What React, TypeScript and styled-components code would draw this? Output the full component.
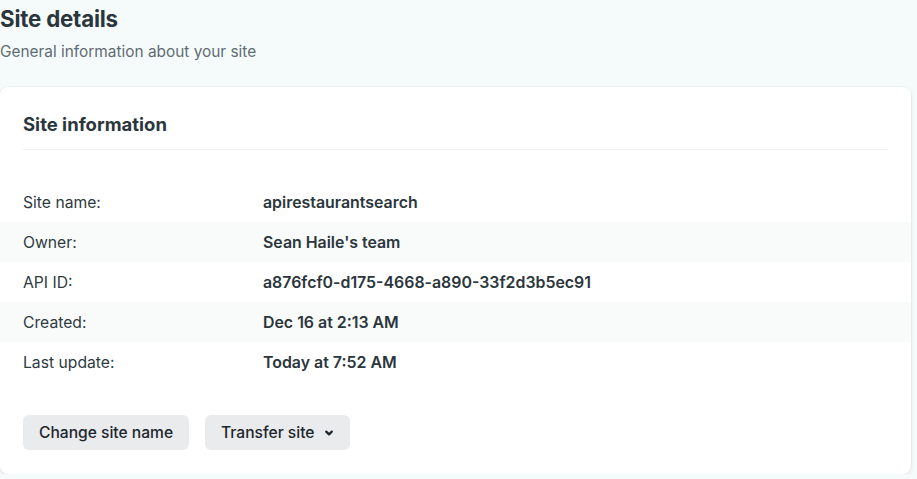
import React from 'react';
import styled, { createGlobalStyle } from 'styled-components';

const GlobalStyle = createGlobalStyle`
  html, body {
    margin: 0;
    padding: 0;
    background: #f5fbfb;
    font-family: Inter, "Noto Sans", "Liberation Sans", sans-serif;
    color: #2e3a41;
    -webkit-font-smoothing: antialiased;
  }
`;

const Page = styled.div`
  width: 911px;
  padding-top: 5px;
`;

const PageTitle = styled.h1`
  margin: 0;
  font-size: 22.3px;
  line-height: 28px;
  font-weight: 700;
  color: #2b363c;
  letter-spacing: -0.2px;
`;

const PageSubtitle = styled.p`
  margin: 8px 0 0;
  font-size: 15.4px;
  line-height: 22px;
  color: #616b72;
`;

const Card = styled.section`
  margin-top: 24px;
  background: #fff;
  border-radius: 8px;
  box-shadow: 0 0 0 1px rgba(14, 30, 37, 0.03), 0 2px 4px rgba(14, 30, 37, 0.08);
  padding: 24px 0 24px;
`;

const CardHeader = styled.div`
  margin: 0 23px;
  padding-bottom: 12px;
  border-bottom: 1px solid #eef1f2;
`;

const CardTitle = styled.h2`
  margin: 0;
  font-size: 18.5px;
  line-height: 26px;
  font-weight: 700;
  color: #2b363c;
`;

const DetailList = styled.dl`
  margin: 32px 0 0;
`;

const DetailRow = styled.div<{ striped: boolean }>`
  display: grid;
  grid-template-columns: 240px 1fr;
  align-items: center;
  height: 40px;
  padding: 0 23px;
  background: ${(p) => (p.striped ? '#f9fafa' : 'transparent')};
`;

const Label = styled.dt`
  font-size: 15.7px;
  color: #2e3a41;
`;

const Value = styled.dd`
  margin: 0;
  font-size: 15.9px;
  font-weight: 600;
  color: #2b363c;
`;

const Actions = styled.div`
  display: flex;
  gap: 16px;
  margin-top: 33px;
  padding: 0 23px;
`;

const Button = styled.button`
  display: inline-flex;
  align-items: center;
  gap: 10px;
  height: 35px;
  padding: 0 16px;
  border: none;
  border-radius: 6px;
  background: #e9ebed;
  font-family: inherit;
  font-size: 15.6px;
  font-weight: 500;
  color: #1d262c;
  cursor: pointer;
`;

const Chevron = () => (
  <svg width="10" height="10" viewBox="0 0 10 10" aria-hidden="true">
    <path d="M2.2 3.6 L5 6.4 L7.8 3.6" fill="none" stroke="#1d262c" strokeWidth="2.2" strokeLinecap="round" strokeLinejoin="round" />
  </svg>
);

const details = [
  ['Site name:', 'apirestaurantsearch'],
  ['Owner:', "Sean Haile's team"],
  ['API ID:', 'a876fcf0-d175-4668-a890-33f2d3b5ec91'],
  ['Created:', 'Dec 16 at 2:13 AM'],
  ['Last update:', 'Today at 7:52 AM'],
];

export default function App() {
  return (
    <>
      <GlobalStyle />
      <Page>
        <PageTitle>Site details</PageTitle>
        <PageSubtitle>General information about your site</PageSubtitle>
        <Card>
          <CardHeader>
            <CardTitle>Site information</CardTitle>
          </CardHeader>
          <DetailList>
            {details.map(([label, value], i) => (
              <DetailRow key={label} striped={i % 2 === 1}>
                <Label>{label}</Label>
                <Value>{value}</Value>
              </DetailRow>
            ))}
          </DetailList>
          <Actions>
            <Button>Change site name</Button>
            <Button>
              Transfer site <Chevron />
            </Button>
          </Actions>
        </Card>
      </Page>
    </>
  );
}
